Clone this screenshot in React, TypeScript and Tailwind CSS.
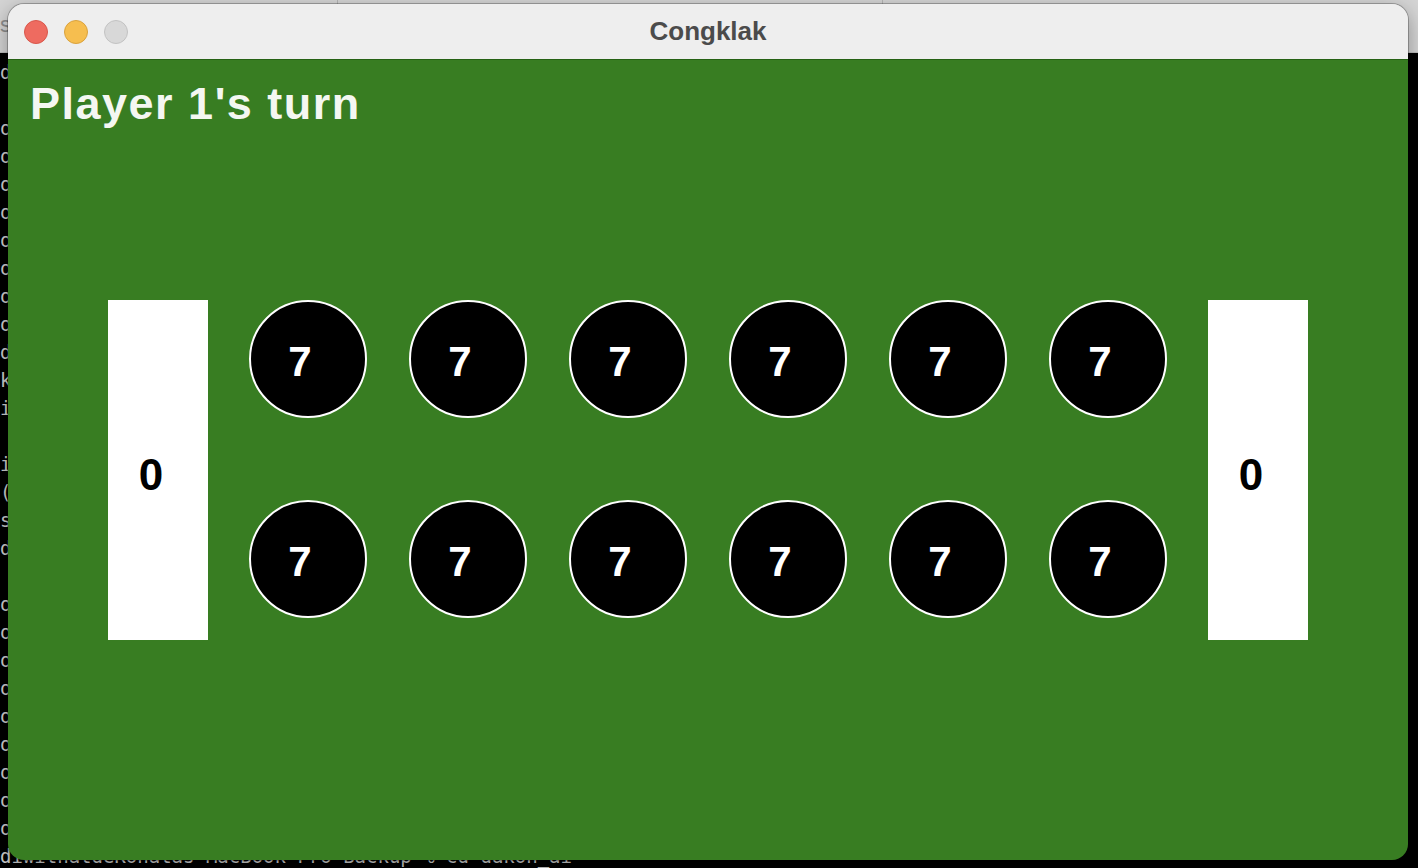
import React from "react";

const leftColumn = [
  "d", "", "o", "o", "o", "o", "o", "o", "o", "o", "d", "k", "i", "", "i", "(", "s", "d", "",
  "o", "o", "o", "o", "o", "o", "o", "o", "o",
];

const Pit = ({ seeds }: { seeds: number }) => (
  <div className="flex h-[118px] w-[118px] items-center justify-center rounded-full border-2 border-white bg-black pr-4 pt-[6px]">
    <span className="text-[42px] font-bold leading-none text-white">{seeds}</span>
  </div>
);

const Store = ({ seeds }: { seeds: number }) => (
  <div className="flex h-[340px] w-[100px] items-center justify-center bg-white pr-[14px] pt-[10px]">
    <span className="text-[44px] font-bold leading-none text-black">{seeds}</span>
  </div>
);

const App = () => {
  const top = [7, 7, 7, 7, 7, 7];
  const bottom = [7, 7, 7, 7, 7, 7];

  return (
    <div className="relative h-[868px] w-[1418px] overflow-hidden bg-black font-['Liberation_Sans',sans-serif]">
      {/* terminal behind the game window */}
      <div className="flex h-[53px] border-b border-[#bdbdbd] bg-[#d4d4d4]">
        <div className="w-[338px] border-r border-[#b4b4b4] pt-[14px] text-[22px] leading-none text-[#8c8c8c]">
          s
        </div>
        <div className="w-[545px] border-r border-[#b4b4b4]" />
        <div className="flex-1" />
      </div>
      <div className="pt-[5px] font-['DejaVu_Sans_Mono',monospace] text-[19px] leading-[28px] text-[#cfcfcf]">
        {leftColumn.map((c, i) => (
          <div key={i} className="h-[28px] whitespace-pre">
            {c}
          </div>
        ))}
        <div className="h-[28px] whitespace-pre">
          diwithatdeKonatas-MacBook-Pro-Backup % cd dakon_ai
        </div>
      </div>

      {/* game window */}
      <div className="absolute left-[8px] top-[4px] flex h-[856px] w-[1400px] flex-col overflow-hidden rounded-[16px] shadow-[0_0_0_1px_rgba(0,0,0,0.25),0_6px_20px_rgba(0,0,0,0.35)]">
        <div className="relative flex h-[56px] shrink-0 items-center border-b border-[#256114] bg-[#eeeeee]">
          <div className="flex gap-4 pl-4">
            <span className="h-6 w-6 rounded-full border border-[#d8574b] bg-[#ee6b60]" />
            <span className="h-6 w-6 rounded-full border border-[#d9a23e] bg-[#f6be4f]" />
            <span className="h-6 w-6 rounded-full border border-[#c2c2c2] bg-[#d8d8d8]" />
          </div>
          <div className="absolute inset-0 flex items-center justify-center text-[26px] font-bold text-[#4b4b4b]">
            Congklak
          </div>
        </div>

        <div className="flex flex-1 flex-col bg-[#387d22]">
          <div className="pl-[22px] pt-[21px] text-[45px] font-bold leading-none tracking-[1.5px] text-[#f4f7f2]">
            Player 1's turn
          </div>

          <div className="mt-[174px] flex items-start justify-center">
            <Store seeds={0} />
            <div className="mx-[41px] flex flex-col gap-[82px]">
              <div className="flex gap-[42px]">
                {top.map((s, i) => (
                  <Pit key={i} seeds={s} />
                ))}
              </div>
              <div className="flex gap-[42px]">
                {bottom.map((s, i) => (
                  <Pit key={i} seeds={s} />
                ))}
              </div>
            </div>
            <Store seeds={0} />
          </div>
        </div>
      </div>
    </div>
  );
};

export default App;
